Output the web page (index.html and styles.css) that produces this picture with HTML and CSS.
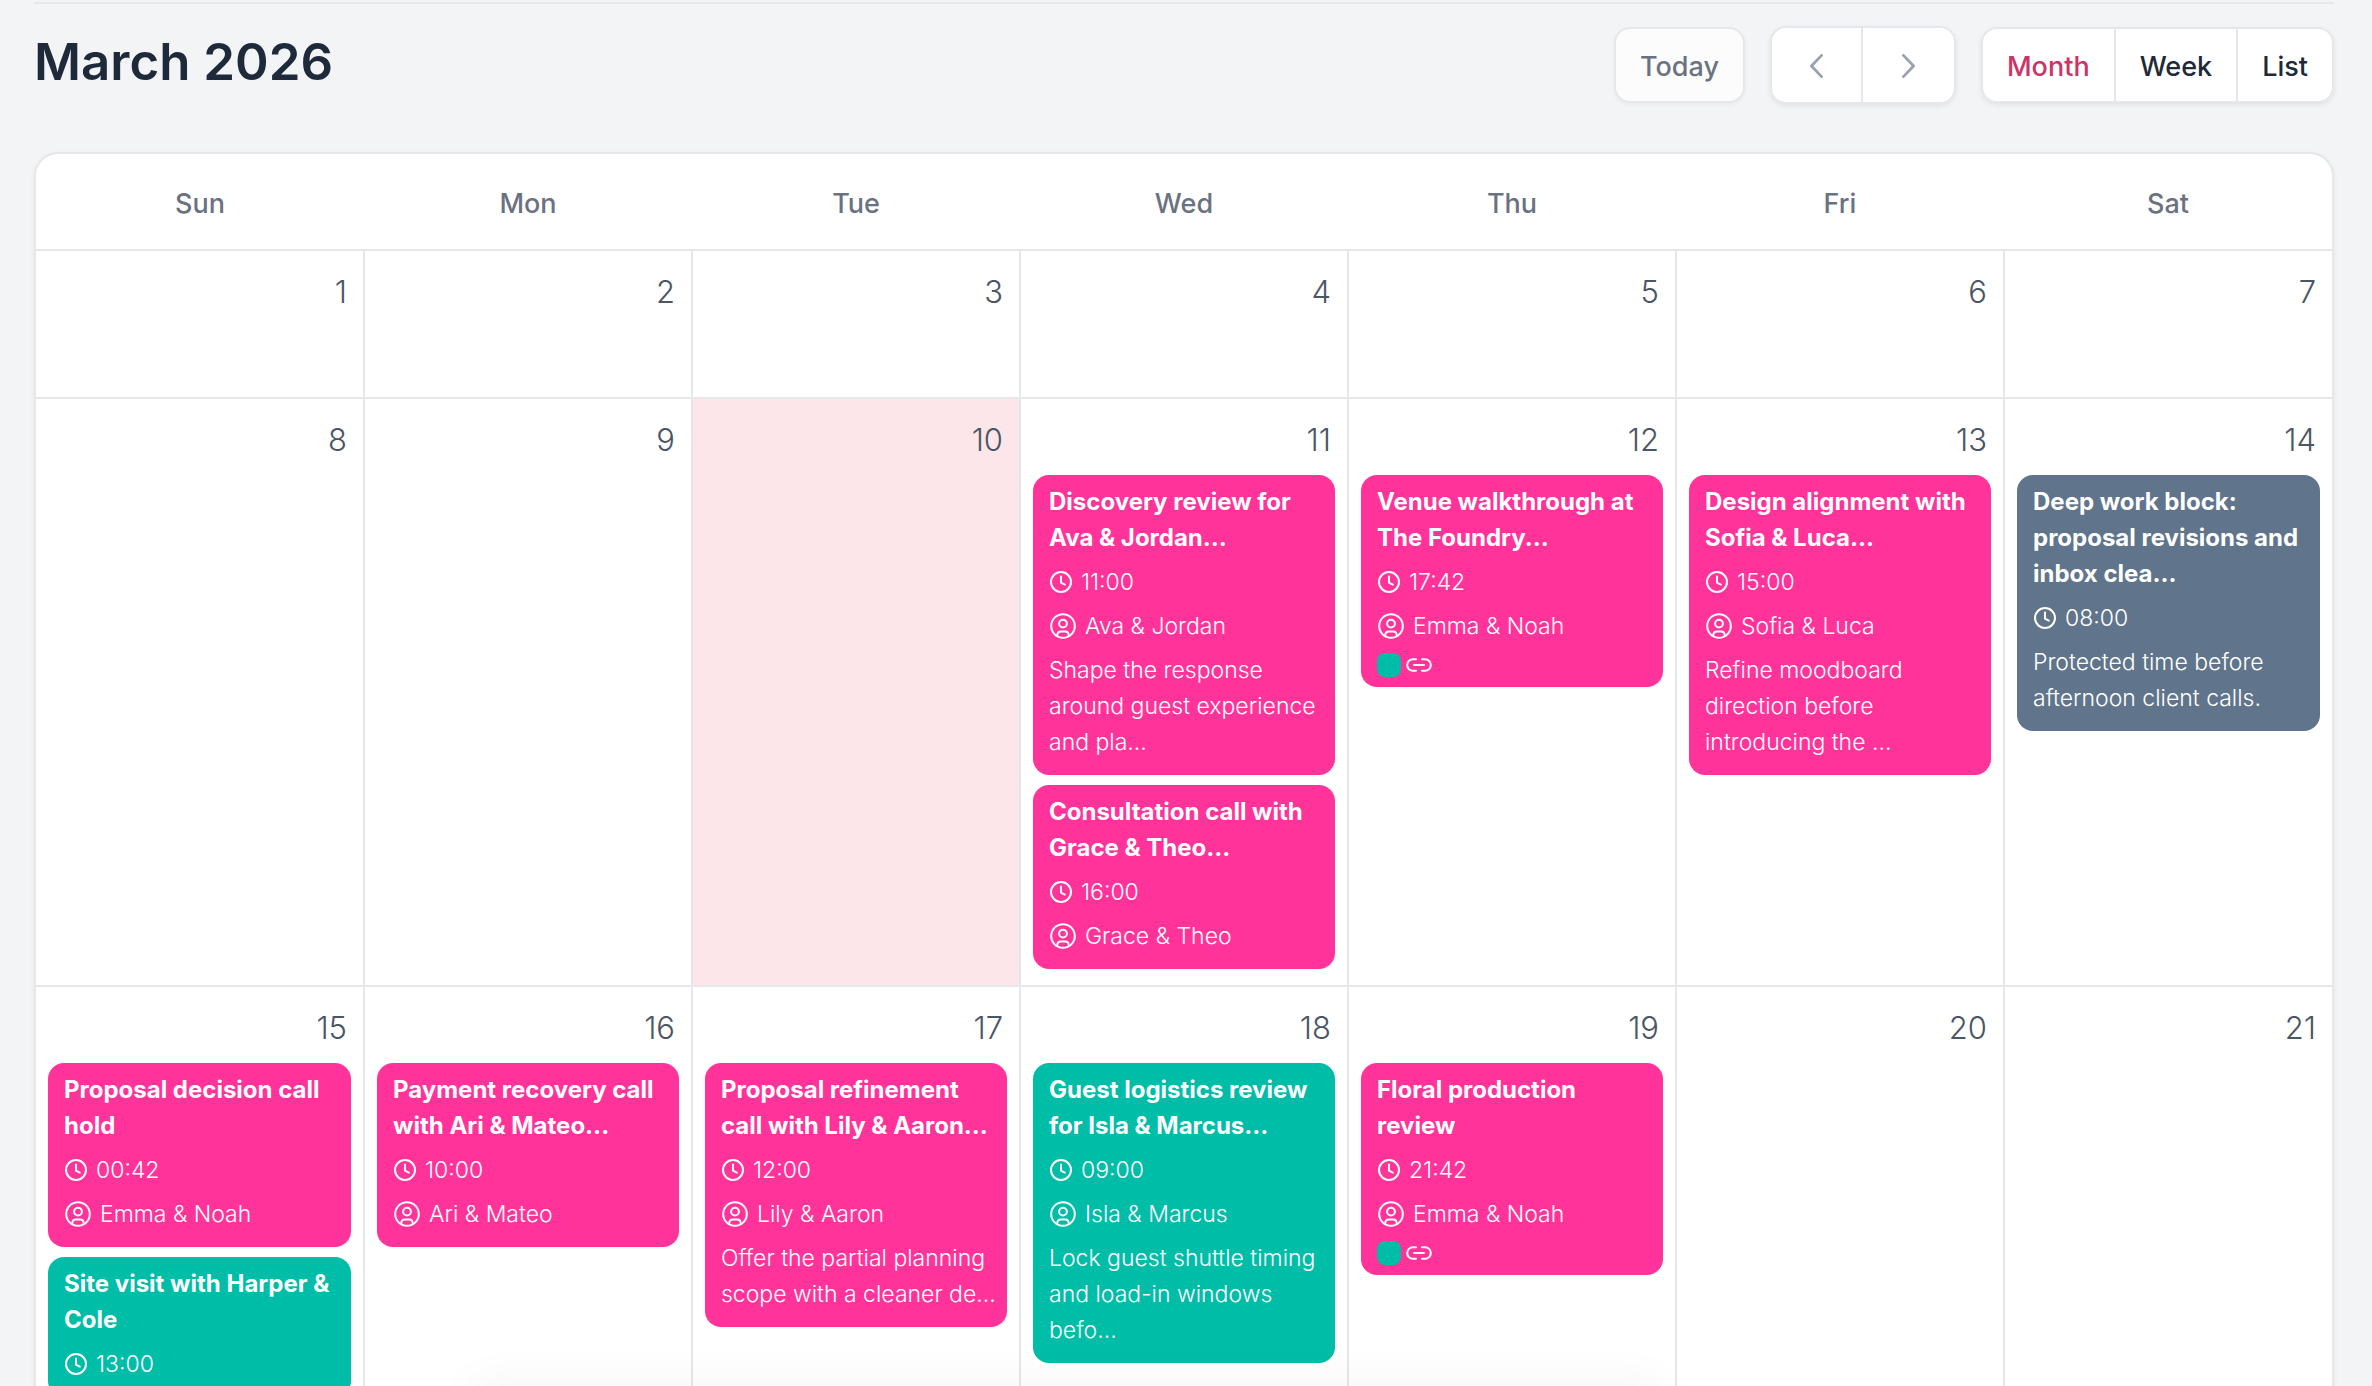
FILE: index.html
```
<!DOCTYPE html>
<html lang="en">
<head>
  <meta charset="UTF-8" />
  <meta name="viewport" content="width=device-width, initial-scale=1" />
  <title>March 2026</title>
  <link rel="stylesheet" href="styles.css">
</head>
<body>
  <!-- Icon set -->
  <svg class="icon-set" aria-hidden="true">
    <symbol id="i-clock" viewBox="0 0 22 22">
      <circle cx="11" cy="11" r="10" />
      <path d="M11 5.5v6.2l3.8 1.9" />
    </symbol>
    <symbol id="i-person" viewBox="0 0 26 26">
      <circle cx="13" cy="13" r="11.8" />
      <circle cx="13" cy="10.6" r="3.9" />
      <path d="M7.3 22.2c0-2.6 1.5-3.7 3.500-3.7h4.4c2 0 3.5 1.1 3.5 3.7" />
    </symbol>
    <symbol id="i-link" viewBox="0 0 26 14">
      <path d="M10 1.2H7a5.8 5.8 0 0 0 0 11.6h3M16 1.2h3a5.8 5.8 0 0 1 0 11.6h-3M8 7h10" />
    </symbol>
  </svg>

  <div class="page">
    <div class="page-top"></div>

    <!-- Toolbar -->
    <div class="toolbar">
      <h1>March 2026</h1>
      <div class="toolbar-actions">
        <button class="btn today-btn" disabled>Today</button>
        <div class="btn-group nav-group">
          <button class="btn" aria-label="Previous month">
            <svg class="chevron" viewBox="0 0 14 26"><path d="M12.500 1.500L1.500 13l11 11.500" /></svg>
          </button>
          <button class="btn" aria-label="Next month">
            <svg class="chevron" viewBox="0 0 14 26"><path d="M1.500 1.500L12.500 13l-11 11.500" /></svg>
          </button>
        </div>
        <div class="btn-group">
          <button class="btn active">Month</button>
          <button class="btn">Week</button>
          <button class="btn">List</button>
        </div>
      </div>
    </div>

    <!-- Month grid -->
    <div class="calendar">
      <table>
        <thead>
          <tr>
            <th>Sun</th>
            <th>Mon</th>
            <th>Tue</th>
            <th>Wed</th>
            <th>Thu</th>
            <th>Fri</th>
            <th>Sat</th>
          </tr>
        </thead>
        <tbody>
          <tr>
            <td><div class="day">1</div></td>
            <td><div class="day">2</div></td>
            <td><div class="day">3</div></td>
            <td><div class="day">4</div></td>
            <td><div class="day">5</div></td>
            <td><div class="day">6</div></td>
            <td><div class="day">7</div></td>
          </tr>
          <tr>
            <td><div class="day">8</div></td>
            <td><div class="day">9</div></td>
            <td class="is-today"><div class="day">10</div></td>
            <td>
              <div class="day">11</div>
              <a class="event pink" href="#">
                <strong>Discovery review for Ava &amp; Jordan...</strong>
                <span class="meta"><svg class="clock"><use href="#i-clock" /></svg>11:00</span>
                <span class="meta"><svg class="person"><use href="#i-person" /></svg>Ava &amp; Jordan</span>
                <span class="note">Shape the response around guest experience and pla...</span>
              </a>
              <a class="event pink" href="#">
                <strong>Consultation call with Grace &amp; Theo...</strong>
                <span class="meta"><svg class="clock"><use href="#i-clock" /></svg>16:00</span>
                <span class="meta"><svg class="person"><use href="#i-person" /></svg>Grace &amp; Theo</span>
              </a>
            </td>
            <td>
              <div class="day">12</div>
              <a class="event pink has-tags" href="#">
                <strong>Venue walkthrough at The Foundry...</strong>
                <span class="meta"><svg class="clock"><use href="#i-clock" /></svg>17:42</span>
                <span class="meta"><svg class="person"><use href="#i-person" /></svg>Emma &amp; Noah</span>
                <span class="tags"><i class="swatch"></i><svg class="link"><use href="#i-link" /></svg></span>
              </a>
            </td>
            <td>
              <div class="day">13</div>
              <a class="event pink" href="#">
                <strong>Design alignment with Sofia &amp; Luca...</strong>
                <span class="meta"><svg class="clock"><use href="#i-clock" /></svg>15:00</span>
                <span class="meta"><svg class="person"><use href="#i-person" /></svg>Sofia &amp; Luca</span>
                <span class="note">Refine moodboard direction before introducing the ...</span>
              </a>
            </td>
            <td>
              <div class="day">14</div>
              <a class="event slate" href="#">
                <strong>Deep work block: proposal revisions and inbox clea...</strong>
                <span class="meta"><svg class="clock"><use href="#i-clock" /></svg>08:00</span>
                <span class="note">Protected time before afternoon client calls.</span>
              </a>
            </td>
          </tr>
          <tr>
            <td>
              <div class="day">15</div>
              <a class="event pink" href="#">
                <strong>Proposal decision call hold</strong>
                <span class="meta"><svg class="clock"><use href="#i-clock" /></svg>00:42</span>
                <span class="meta"><svg class="person"><use href="#i-person" /></svg>Emma &amp; Noah</span>
              </a>
              <a class="event teal" href="#">
                <strong>Site visit with Harper &amp; Cole</strong>
                <span class="meta"><svg class="clock"><use href="#i-clock" /></svg>13:00</span>
              </a>
            </td>
            <td>
              <div class="day">16</div>
              <a class="event pink" href="#">
                <strong>Payment recovery call with Ari &amp; Mateo...</strong>
                <span class="meta"><svg class="clock"><use href="#i-clock" /></svg>10:00</span>
                <span class="meta"><svg class="person"><use href="#i-person" /></svg>Ari &amp; Mateo</span>
              </a>
            </td>
            <td>
              <div class="day">17</div>
              <a class="event pink" href="#">
                <strong>Proposal refinement call with Lily &amp; Aaron...</strong>
                <span class="meta"><svg class="clock"><use href="#i-clock" /></svg>12:00</span>
                <span class="meta"><svg class="person"><use href="#i-person" /></svg>Lily &amp; Aaron</span>
                <span class="note">Offer the partial planning scope with a cleaner de...</span>
              </a>
            </td>
            <td>
              <div class="day">18</div>
              <a class="event teal" href="#">
                <strong>Guest logistics review for Isla &amp; Marcus...</strong>
                <span class="meta"><svg class="clock"><use href="#i-clock" /></svg>09:00</span>
                <span class="meta"><svg class="person"><use href="#i-person" /></svg>Isla &amp; Marcus</span>
                <span class="note">Lock guest shuttle timing and load-in windows befo...</span>
              </a>
            </td>
            <td>
              <div class="day">19</div>
              <a class="event pink has-tags" href="#">
                <strong>Floral production review</strong>
                <span class="meta"><svg class="clock"><use href="#i-clock" /></svg>21:42</span>
                <span class="meta"><svg class="person"><use href="#i-person" /></svg>Emma &amp; Noah</span>
                <span class="tags"><i class="swatch"></i><svg class="link"><use href="#i-link" /></svg></span>
              </a>
            </td>
            <td><div class="day">20</div></td>
            <td><div class="day">21</div></td>
          </tr>
        </tbody>
      </table>
    </div>
  </div>

  <!-- Soft shade along the bottom edge -->
  <div class="bottom-shade"></div>
</body>
</html>
```
FILE: styles.css
```
* {
  box-sizing: border-box;
}

body {
  margin: 0;
  background: #f3f4f6;
  color: #1e2939;
  font-family: Inter, "Liberation Sans", sans-serif;
}

.icon-set {
  position: absolute;
  width: 0;
  height: 0;
}

.page {
  padding: 0 38px 0 34px;
}

.page-top {
  height: 4px;
  border-bottom: 2px solid #e5e7eb;
}

/* Toolbar */
.toolbar {
  display: flex;
  justify-content: space-between;
  align-items: center;
  padding: 22px 0 48px;
}

h1 {
  margin: 0;
  padding-bottom: 6px;
  font-size: 51px;
  font-weight: 600;
  line-height: 60px;
}

.toolbar-actions {
  display: flex;
  align-items: center;
  gap: 25px;
}

.btn {
  height: 76px;
  padding: 2px 24px 0;
  border: 2px solid #e5e7eb;
  border-radius: 16px;
  background: #ffffff;
  color: #1e2939;
  font-family: inherit;
  font-size: 27px;
  font-weight: 500;
  cursor: pointer;
}

.today-btn {
  background: #fcfcfc;
  color: #6a7282;
  box-shadow: 0 2px 4px rgba(0, 0, 0, 0.04);
  cursor: default;
}

.btn-group {
  display: flex;
  border-radius: 16px;
  box-shadow: 0 2px 5px rgba(0, 0, 0, 0.08);
}

.btn-group .btn {
  border-radius: 0;
}

.btn-group .btn + .btn {
  border-left: none;
}

.btn-group .btn:first-child {
  border-radius: 16px 0 0 16px;
}

.btn-group .btn:last-child {
  border-radius: 0 16px 16px 0;
}

.btn.active {
  color: #cc3366;
}

.nav-group .btn {
  display: flex;
  align-items: center;
  justify-content: center;
  width: 93px;
  height: 78px;
}

.chevron {
  width: 13px;
  height: 24px;
  fill: none;
  stroke: #99a1af;
  stroke-width: 3;
  stroke-linecap: round;
  stroke-linejoin: round;
}

/* Month grid */
.calendar {
  overflow: hidden;
  border: 2px solid #e5e7eb;
  border-bottom: none;
  border-radius: 24px 24px 0 0;
  background: #ffffff;
  box-shadow: 0 2px 5px rgba(0, 0, 0, 0.06);
}

table {
  width: 100%;
  table-layout: fixed;
  border-collapse: collapse;
}

th {
  height: 96px;
  padding: 3px 0 0;
  color: #6a7282;
  font-size: 27px;
  font-weight: 500;
}

td {
  height: 148px;
  padding: 17px 12px 16px;
  border-top: 2px solid #e5e7eb;
  vertical-align: top;
}

td + td {
  border-left: 2px solid #e5e7eb;
}

.is-today {
  background: #fde6ea;
}

.day {
  padding-right: 4px;
  color: #4a5565;
  font-size: 31px;
  font-weight: 300;
  line-height: 48px;
  text-align: right;
}

/* Events */
.event {
  display: block;
  margin-top: 10px;
  padding: 9px 8px 15px 16px;
  border-radius: 16px;
  color: #ffffff;
  font-size: 23px;
  font-weight: 300;
  line-height: 36px;
  text-decoration: none;
}

.day + .event {
  margin-top: 11px;
}

.event strong {
  display: block;
  font-size: 24px;
  font-weight: 700;
}

.pink {
  background: #ff3399;
}

.teal {
  background: #00bda8;
}

.slate {
  background: #60758b;
}

.meta {
  display: flex;
  align-items: center;
  gap: 9px;
  margin-top: 8px;
  padding-left: 1px;
}

.note {
  display: block;
  margin-top: 8px;
}

.event svg {
  flex: none;
  fill: none;
  stroke: #ffffff;
  stroke-width: 2;
  stroke-linecap: round;
}

.clock {
  width: 22px;
  height: 22px;
}

.person {
  width: 26px;
  height: 26px;
}

.link {
  width: 26px;
  height: 14px;
}

.event.has-tags {
  padding-bottom: 10px;
}

.tags {
  display: flex;
  align-items: center;
  gap: 5px;
  margin-top: 9px;
}

.swatch {
  width: 24px;
  height: 24px;
  border-radius: 8px;
  background: #00bda8;
}

.bottom-shade {
  position: fixed;
  top: 100%;
  left: 20%;
  right: 30%;
  height: 40px;
  box-shadow: 0 0 50px rgba(0, 0, 0, 0.05);
  pointer-events: none;
}
```
